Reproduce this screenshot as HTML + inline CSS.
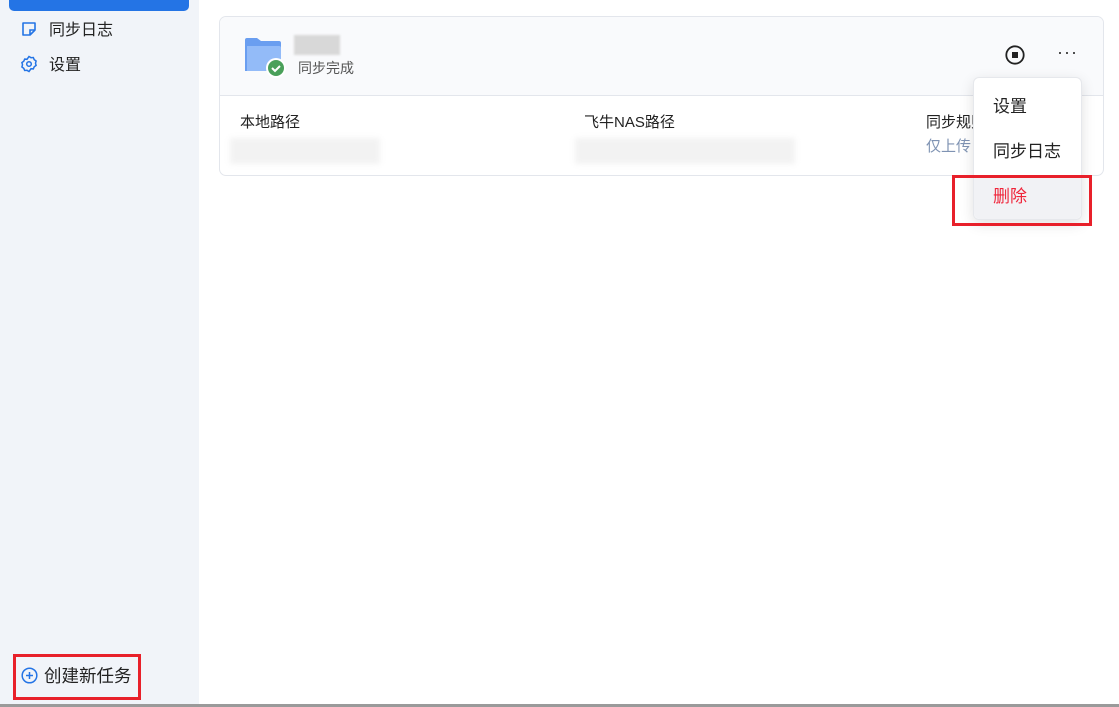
<html><head><style>
body{margin:0;width:1119px;height:707px;position:relative;overflow:hidden;background:#fff;font-family:"Liberation Sans","Noto Sans CJK SC",sans-serif;}
.sb{position:absolute;left:0;top:0;width:199px;height:707px;background:#f1f4f9;}
.abs{position:absolute;}
.t{font-size:16px;color:#222;}
</style></head><body>
<div class="sb"></div>
<div class="abs" style="left:9px;top:-10px;width:180px;height:21px;background:#2474e5;border-radius:5px;"></div>
<svg class="abs" style="left:21px;top:21px" width="16" height="16" viewBox="0 0 16 16"><path d="M2 2h12v7l-5 5H2z" fill="none" stroke="#2474e5" stroke-width="1.6" stroke-linejoin="round"/><path d="M9 14v-5h5" fill="none" stroke="#2474e5" stroke-width="1.6"/></svg>
<div class="abs t" style="left:49px;top:16px">同步日志</div>
<svg class="abs" style="left:20px;top:55px" width="18" height="18" viewBox="0 0 18 18"><path d="M9 1.5l2 1.2 2.3-.2.9 2.1 1.9 1.4-.6 2.2.6 2.2-1.9 1.4-.9 2.1-2.3-.2L9 16.5l-2-1.2-2.3.2-.9-2.1-1.9-1.4.6-2.2-.6-2.2 1.9-1.4.9-2.1 2.3.2z" fill="none" stroke="#2474e5" stroke-width="1.5"/><circle cx="9" cy="9" r="2.3" fill="none" stroke="#2474e5" stroke-width="1.5"/></svg>
<div class="abs t" style="left:49px;top:51px">设置</div>
<div class="abs" style="left:13px;top:654px;width:128px;height:46px;border:3px solid #e8202a;box-sizing:border-box;"></div>
<svg class="abs" style="left:21px;top:667px" width="17" height="17" viewBox="0 0 17 17"><circle cx="8.5" cy="8.5" r="7.3" fill="none" stroke="#2474e5" stroke-width="1.5"/><path d="M8.5 5v7M5 8.5h7" stroke="#2474e5" stroke-width="1.5"/></svg>
<div class="abs" style="left:44px;top:663px;font-size:17.5px;color:#222">创建新任务</div>
<div class="abs" style="left:0;top:704px;width:1119px;height:3px;background:#9a9a9a"></div>
<div class="abs" style="left:219px;top:16px;width:885px;height:160px;border:1px solid #e3e6ec;border-radius:7px;box-sizing:border-box;overflow:hidden;">
<div style="height:78px;background:#f9fafc;border-bottom:1px solid #e3e6ec"></div>
</div>
<svg class="abs" style="left:244px;top:37px" width="46" height="42" viewBox="0 0 46 42"><path d="M1 3a2 2 0 0 1 2-2h10l4 3h18a2 2 0 0 1 2 2v28H1z" fill="#6a9ef0"/><path d="M3 9h32a2 2 0 0 1 2 2v23H3z" fill="#93bbf8"/><circle cx="32" cy="31" r="10" fill="#fff"/><circle cx="32" cy="31" r="8" fill="#4aa05a"/><path d="M28 31l3 3 5-5" fill="none" stroke="#fff" stroke-width="2"/></svg>
<div class="abs" style="left:294px;top:35px;width:46px;height:20px;background:#d8d8d8;filter:blur(1px)"></div>
<div class="abs" style="left:298px;top:58px;font-size:14px;color:#555">同步完成</div>
<svg class="abs" style="left:1004px;top:44px" width="22" height="22" viewBox="0 0 22 22"><circle cx="11" cy="11" r="8.7" fill="none" stroke="#222" stroke-width="1.8"/><rect x="8" y="8" width="6" height="6" fill="#222"/></svg>
<div class="abs" style="left:1057px;top:42px;font-size:18px;color:#333;letter-spacing:1px">···</div>
<div class="abs" style="left:240px;top:111px;font-size:15px;color:#222">本地路径</div>
<div class="abs" style="left:230px;top:138px;width:150px;height:26px;background:#f2f2f2;filter:blur(3px)"></div>
<div class="abs" style="left:584px;top:111px;font-size:15px;color:#222">飞牛NAS路径</div>
<div class="abs" style="left:575px;top:138px;width:220px;height:26px;background:#f2f2f2;filter:blur(3px)"></div>
<div class="abs" style="left:926px;top:111px;font-size:15px;color:#222">同步规则</div>
<div class="abs" style="left:926px;top:135px;font-size:15px;color:#7f93b3">仅上传</div>
<div class="abs" style="left:973px;top:77px;width:109px;height:143px;background:#fff;border:1px solid #e6e8ec;border-radius:6px;box-shadow:0 4px 14px rgba(0,0,0,.12);box-sizing:border-box;"></div>
<div class="abs" style="left:974px;top:175px;width:107px;height:44px;background:#f1f2f5;border-radius:0 0 6px 6px"></div>
<div class="abs" style="left:993px;top:92px;font-size:17px;color:#222">设置</div>
<div class="abs" style="left:993px;top:137px;font-size:17px;color:#222">同步日志</div>
<div class="abs" style="left:993px;top:182px;font-size:17px;color:#f0253a">删除</div>
<div class="abs" style="left:952px;top:175px;width:140px;height:51px;border:3px solid #e8202a;box-sizing:border-box"></div>
</body></html>
